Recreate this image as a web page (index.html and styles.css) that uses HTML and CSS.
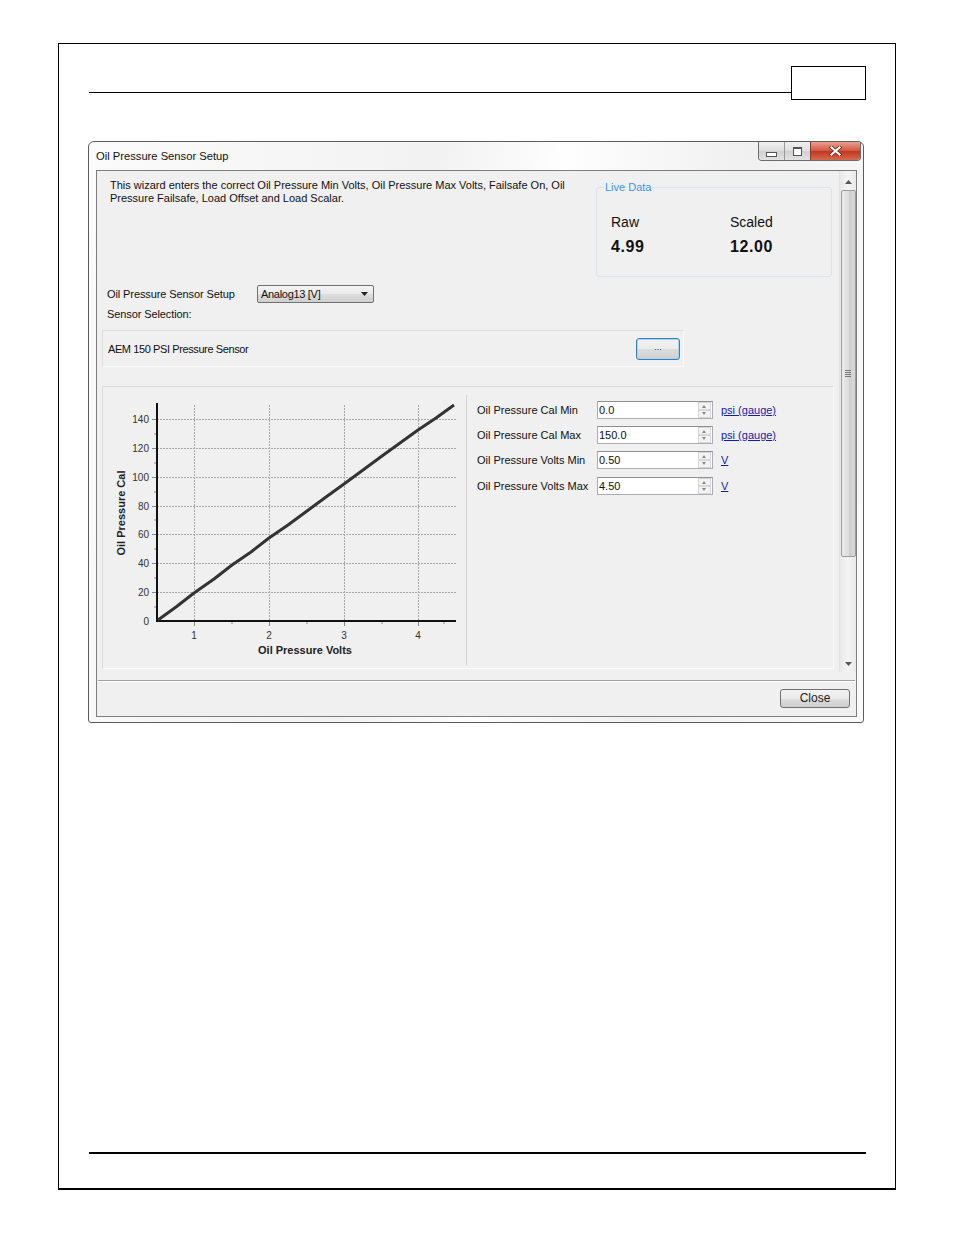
FILE: index.html
```html
<!DOCTYPE html>
<html>
<head>
<meta charset="utf-8">
<link rel="stylesheet" href="styles.css">
</head>
<body>
<div class="page">
  <div class="page-header">
    <div class="header-line"></div>
    <div class="header-box"></div>
  </div>

  <div class="window">
    <div class="titlebar">
      <div class="title">Oil Pressure Sensor Setup</div>
      <div class="caption-buttons">
        <div class="cap-btn cap-min"><span class="min-glyph"></span></div>
        <div class="cap-btn cap-max"><span class="max-glyph"></span></div>
        <div class="cap-btn cap-close">
          <svg width="13" height="10" viewBox="0 0 13 10"><path d="M2.5 1.5 L10.5 8.5 M10.5 1.5 L2.5 8.5" stroke="#6a2018" stroke-width="3.6" stroke-linecap="square"/><path d="M2.5 1.5 L10.5 8.5 M10.5 1.5 L2.5 8.5" stroke="#ffffff" stroke-width="2.2" stroke-linecap="square"/></svg>
        </div>
      </div>
    </div>

    <div class="client">
      <div class="main">
        <div class="content">
          <div class="top">
            <p class="desc">This wizard enters the correct Oil Pressure Min Volts, Oil Pressure Max Volts, Failsafe On, Oil Pressure Failsafe, Load Offset and Load Scalar.</p>
            <div class="live">
              <span class="legend">Live Data</span>
              <div class="live-grid">
                <div class="live-col">
                  <div class="live-label">Raw</div>
                  <div class="live-value">4.99</div>
                </div>
                <div class="live-col">
                  <div class="live-label">Scaled</div>
                  <div class="live-value">12.00</div>
                </div>
              </div>
            </div>
          </div>

          <div class="setup-row">
            <span class="setup-label">Oil Pressure Sensor Setup</span>
            <div class="combo">
              <span>Analog13 [V]</span>
              <svg class="combo-arrow" width="7" height="4" viewBox="0 0 7 4"><path d="M0 0 H7 L3.5 4 Z" fill="#222"/></svg>
            </div>
          </div>
          <div class="sel-label">Sensor Selection:</div>

          <div class="sensor-panel">
            <span class="sensor-name">AEM 150 PSI Pressure Sensor</span>
            <div class="dots-btn">...</div>
          </div>

          <div class="lower">
            <div class="chart-col">
              <svg width="362" height="270" viewBox="0 0 362 270" class="chart">
                <g stroke="#a8a8a8" stroke-width="1" stroke-dasharray="2 1">
                  <line x1="53" y1="24.5" x2="352" y2="24.5"/>
                  <line x1="53" y1="53.5" x2="352" y2="53.5"/>
                  <line x1="53" y1="82.5" x2="352" y2="82.5"/>
                  <line x1="53" y1="111.5" x2="352" y2="111.5"/>
                  <line x1="53" y1="139.5" x2="352" y2="139.5"/>
                  <line x1="53" y1="168.5" x2="352" y2="168.5"/>
                  <line x1="53" y1="197.5" x2="352" y2="197.5"/>
                  <line x1="90.5" y1="10" x2="90.5" y2="226"/>
                  <line x1="165.5" y1="10" x2="165.5" y2="226"/>
                  <line x1="240.5" y1="10" x2="240.5" y2="226"/>
                  <line x1="314.5" y1="10" x2="314.5" y2="226"/>
                </g>
                <g stroke="#888" stroke-width="1">
                  <line x1="90.5" y1="226" x2="90.5" y2="231"/>
                  <line x1="165.5" y1="226" x2="165.5" y2="231"/>
                  <line x1="240.5" y1="226" x2="240.5" y2="231"/>
                  <line x1="314.5" y1="226" x2="314.5" y2="231"/>
                  <line x1="128" y1="226" x2="128" y2="229"/>
                  <line x1="203" y1="226" x2="203" y2="229"/>
                  <line x1="278" y1="226" x2="278" y2="229"/>
                  <line x1="340" y1="226" x2="340" y2="229"/>
                  <line x1="48" y1="24.5" x2="53" y2="24.5"/>
                  <line x1="48" y1="53.5" x2="53" y2="53.5"/>
                  <line x1="48" y1="82.5" x2="53" y2="82.5"/>
                  <line x1="48" y1="111.5" x2="53" y2="111.5"/>
                  <line x1="48" y1="139.5" x2="53" y2="139.5"/>
                  <line x1="48" y1="168.5" x2="53" y2="168.5"/>
                  <line x1="48" y1="197.5" x2="53" y2="197.5"/>
                  <line x1="50" y1="39" x2="53" y2="39"/>
                  <line x1="50" y1="68" x2="53" y2="68"/>
                  <line x1="50" y1="97" x2="53" y2="97"/>
                  <line x1="50" y1="125" x2="53" y2="125"/>
                  <line x1="50" y1="154" x2="53" y2="154"/>
                  <line x1="50" y1="183" x2="53" y2="183"/>
                  <line x1="50" y1="212" x2="53" y2="212"/>
                </g>
                <line x1="53" y1="8" x2="53" y2="227" stroke="#111" stroke-width="2"/>
                <line x1="52" y1="226" x2="352" y2="226" stroke="#111" stroke-width="2"/>
                <polyline points="54,225 72,212 90,198 110,184 128,170 147,157 165,143 184,130 203,116 222,102 240,89 259,75 278,61 296,48 314,35 332,23 350,10" fill="none" stroke="#333" stroke-width="3" stroke-linejoin="round"/>
                <g class="tick" text-anchor="end">
                  <text x="45" y="28">140</text>
                  <text x="45" y="57">120</text>
                  <text x="45" y="86">100</text>
                  <text x="45" y="115">80</text>
                  <text x="45" y="143">60</text>
                  <text x="45" y="172">40</text>
                  <text x="45" y="201">20</text>
                  <text x="45" y="230">0</text>
                </g>
                <g class="tick" text-anchor="middle">
                  <text x="90" y="244">1</text>
                  <text x="165" y="244">2</text>
                  <text x="240" y="244">3</text>
                  <text x="314" y="244">4</text>
                </g>
                <text class="axis-title" x="201" y="259" text-anchor="middle">Oil Pressure Volts</text>
                <text class="axis-title" x="0" y="0" text-anchor="middle" transform="translate(21 118) rotate(-90)">Oil Pressure Cal</text>
              </svg>
            </div>
            <div class="form-col">
              <div class="form-row">
                <span class="form-label">Oil Pressure Cal Min</span>
                <div class="spin-input"><span class="val">0.0</span><div class="spin"><span class="spin-up"></span><span class="spin-down"></span></div></div>
                <span class="unit">psi (gauge)</span>
              </div>
              <div class="form-row">
                <span class="form-label">Oil Pressure Cal Max</span>
                <div class="spin-input"><span class="val">150.0</span><div class="spin"><span class="spin-up"></span><span class="spin-down"></span></div></div>
                <span class="unit">psi (gauge)</span>
              </div>
              <div class="form-row">
                <span class="form-label">Oil Pressure Volts Min</span>
                <div class="spin-input"><span class="val">0.50</span><div class="spin"><span class="spin-up"></span><span class="spin-down"></span></div></div>
                <span class="unit">V</span>
              </div>
              <div class="form-row">
                <span class="form-label">Oil Pressure Volts Max</span>
                <div class="spin-input"><span class="val">4.50</span><div class="spin"><span class="spin-up"></span><span class="spin-down"></span></div></div>
                <span class="unit">V</span>
              </div>
            </div>
          </div>
        </div>

        <div class="scrollbar">
          <div class="sb-arrow"><svg width="7" height="4" viewBox="0 0 7 4"><path d="M0 4 H7 L3.5 0 Z" fill="#555"/></svg></div>
          <div class="sb-thumb">
            <svg class="grip" width="6" height="7" viewBox="0 0 6 7"><g stroke="#777" stroke-width="1"><line x1="0" y1="0.5" x2="6" y2="0.5"/><line x1="0" y1="2.5" x2="6" y2="2.5"/><line x1="0" y1="4.5" x2="6" y2="4.5"/><line x1="0" y1="6.5" x2="6" y2="6.5"/></g></svg>
          </div>
          <div class="sb-track"></div>
          <div class="sb-arrow"><svg width="7" height="4" viewBox="0 0 7 4"><path d="M0 0 H7 L3.5 4 Z" fill="#555"/></svg></div>
        </div>
      </div>

      <div class="separator"></div>
      <div class="actions">
        <div class="close-btn">Close</div>
      </div>
    </div>
  </div>

  <div class="footer-line"></div>
</div>
</body>
</html>
```

FILE: styles.css
```css
html, body {
  margin: 0;
  padding: 0;
  background: #ffffff;
}

body {
  font-family: "Liberation Sans", Arial, sans-serif;
  color: #000;
}

.page {
  margin: 43px 0 0 58px;
  width: 838px;
  height: 1147px;
  box-sizing: border-box;
  border: 1px solid #000;
  border-bottom-width: 2px;
  display: flex;
  flex-direction: column;
}

.page-header {
  display: flex;
  align-items: flex-end;
  margin: 22px 29px 0 30px;
  height: 34px;
}

.header-line {
  flex: 1;
  height: 1px;
  background: #000;
  margin-bottom: 7px;
}

.header-box {
  width: 75px;
  height: 34px;
  box-sizing: border-box;
  border: 1px solid #000;
}

.footer-line {
  margin: auto 29px 34px 30px;
  height: 2px;
  background: #000;
}

/* Window */
.window {
  margin: 41px 0 0 29px;
  width: 776px;
  height: 582px;
  box-sizing: border-box;
  border: 1px solid #5d5d5d;
  border-radius: 6px 6px 3px 3px;
  background: linear-gradient(100deg, #fbfbfb 0%, #f2f2f2 40%, #fefefe 55%, #f0f0f0 75%, #fafafa 100%);
  padding: 0 6px 5px 7px;
  display: flex;
  flex-direction: column;
}

.titlebar {
  height: 28px;
  display: flex;
  justify-content: space-between;
  align-items: flex-start;
}

.title {
  padding-top: 7px;
  font-size: 11.2px;
  line-height: 14px;
  color: #111;
}

.caption-buttons {
  display: flex;
  margin-right: -4px;
  height: 19px;
  box-sizing: border-box;
  border: 1px solid #6b6b6b;
  border-top: none;
  border-radius: 0 0 4px 4px;
  overflow: hidden;
}

.cap-btn {
  display: flex;
  align-items: center;
  justify-content: center;
  height: 18px;
  box-sizing: border-box;
}

.cap-min {
  width: 26px;
  background: linear-gradient(#f0f0f0, #dedede 50%, #cfcfcf 51%, #e2e2e2);
  border-right: 1px solid #9a9a9a;
}

.cap-max {
  width: 26px;
  background: linear-gradient(#f0f0f0, #dedede 50%, #cfcfcf 51%, #e2e2e2);
  border-right: 1px solid #8a3a30;
}

.cap-close {
  width: 49px;
  background: linear-gradient(#e8a093, #d2553f 50%, #c1361d 51%, #d56a4f);
}

.min-glyph {
  width: 9px;
  height: 3px;
  margin-top: 6px;
  border: 1px solid #555;
  background: #fff;
}

.max-glyph {
  width: 7px;
  height: 6px;
  border: 1px solid #555;
  border-top-width: 2px;
  background: #fff;
}

.client {
  flex: 1;
  border: 1px solid #7d7d7d;
  background: #f0f0f0;
  display: flex;
  flex-direction: column;
  font-size: 11px;
}

.main {
  height: 501px;
  display: flex;
}

.content {
  flex: 1;
  min-width: 0;
}

.top {
  display: flex;
  height: 106px;
}

.desc {
  margin: 8px 0 0 13px;
  width: 462px;
  font-size: 11px;
  line-height: 13px;
  color: #111;
}

.live {
  flex-shrink: 0;
  margin: 16px 7px 0 auto;
  width: 236px;
  height: 90px;
  box-sizing: border-box;
  border: 1px solid #dde3e8;
  border-radius: 3px;
  padding-left: 7px;
}

.legend {
  display: inline-block;
  margin-top: -7px;
  padding: 0 1px;
  background: #f0f0f0;
  color: #3d95e0;
  font-size: 11px;
  line-height: 13px;
  vertical-align: top;
}

.live-grid {
  display: flex;
  margin: 14px 0 0 7px;
}

.live-col {
  flex-shrink: 0;
  width: 119px;
}

.live-label {
  font-size: 14px;
  line-height: 17px;
  color: #111;
}

.live-value {
  margin-top: 7px;
  font-size: 16px;
  line-height: 18px;
  font-weight: bold;
  letter-spacing: 0.6px;
  color: #111;
}

.setup-row {
  display: flex;
  align-items: center;
  height: 18px;
  margin: 8px 0 0 10px;
}

.setup-label {
  width: 150px;
  color: #111;
  letter-spacing: -0.1px;
}

.combo {
  width: 117px;
  height: 18px;
  box-sizing: border-box;
  border: 1px solid #707070;
  border-radius: 2px;
  background: linear-gradient(#f3f3f3, #ebebeb 50%, #dddddd 51%, #cfcfcf);
  display: flex;
  align-items: center;
  justify-content: space-between;
  padding: 0 5px 0 3px;
  color: #111;
  letter-spacing: -0.3px;
}

.combo-arrow {
  display: block;
}

.sel-label {
  margin: 4px 0 0 10px;
  line-height: 14px;
  color: #111;
  letter-spacing: -0.1px;
}

.sensor-panel {
  margin: 9px 0 0 5px;
  width: 582px;
  height: 37px;
  box-sizing: border-box;
  border: 1px solid #dedede;
  border-right-color: #f8f8f8;
  border-bottom-color: #f8f8f8;
  display: flex;
  align-items: center;
  justify-content: space-between;
  padding: 0 3px 0 5px;
  color: #111;
}

.sensor-name {
  letter-spacing: -0.4px;
}

.dots-btn {
  width: 44px;
  height: 22px;
  box-sizing: border-box;
  border: 1px solid #3c7fb1;
  border-radius: 3px;
  box-shadow: inset 0 0 0 1px #a6d7f2;
  background: linear-gradient(#f2f2f2, #ebebeb 50%, #dddddd 51%, #cfcfcf);
  text-align: center;
  font-size: 9px;
  line-height: 16px;
  color: #333;
}

.lower {
  margin: 19px 0 0 5px;
  width: 732px;
  height: 283px;
  box-sizing: border-box;
  border: 1px solid #dcdcdc;
  border-right-color: #fafafa;
  border-bottom-color: #fafafa;
  display: flex;
  align-items: flex-start;
}

.chart-col {
  width: 362px;
  height: 270px;
  margin: 8px 0 0 1px;
  border-right: 1px solid #d4d4d4;
}

.chart {
  display: block;
}

.tick {
  font-family: "Liberation Sans", Arial, sans-serif;
  font-size: 10px;
  fill: #333;
}

.axis-title {
  font-family: "Liberation Sans", Arial, sans-serif;
  font-size: 11px;
  font-weight: bold;
  fill: #222;
}

.form-col {
  margin: 10px 0 0 10px;
}

.form-row {
  display: flex;
  align-items: center;
  height: 25.3px;
}

.form-label {
  width: 120px;
  color: #111;
}

.spin-input {
  width: 116px;
  height: 18px;
  box-sizing: border-box;
  border: 1px solid #abadb3;
  border-top-color: #8e8f8f;
  background: #fff;
  display: flex;
  align-items: center;
  justify-content: space-between;
  padding-left: 1px;
  color: #111;
}

.spin {
  width: 13px;
  height: 16px;
  margin-right: 1px;
  display: flex;
  flex-direction: column;
}

.spin-up, .spin-down {
  flex: 1;
  box-sizing: border-box;
  border: 1px solid #d6d6d6;
  background: #f3f3f3;
  position: relative;
}

.spin-up::after, .spin-down::after {
  content: "";
  position: absolute;
  left: 3px;
  top: 2px;
  border-left: 2.5px solid transparent;
  border-right: 2.5px solid transparent;
}

.spin-up::after {
  border-bottom: 3px solid #8a8a8a;
}

.spin-down::after {
  top: 1px;
  border-top: 3px solid #8a8a8a;
}

.unit {
  margin-left: 8px;
  color: #1a1aa6;
  text-decoration: underline;
}

.scrollbar {
  width: 17px;
  display: flex;
  flex-direction: column;
  align-items: center;
  padding-top: 2px;
  box-sizing: border-box;
  background: linear-gradient(90deg, #e9e9e9, #f4f4f4 50%, #e9e9e9);
  border-left: 1px solid #e2e2e2;
}

.sb-arrow {
  height: 17px;
  display: flex;
  align-items: center;
  justify-content: center;
}

.sb-thumb {
  width: 15px;
  height: 367px;
  box-sizing: border-box;
  border: 1px solid #9b9b9b;
  border-radius: 2px;
  background: linear-gradient(90deg, #ececec, #dcdcdc 50%, #cdcdcd 51%, #d9d9d9);
  display: flex;
  align-items: center;
  justify-content: center;
}

.grip {
  display: block;
}

.sb-track {
  flex: 1;
}

.separator {
  margin: 8px 1px 0 1px;
  height: 1px;
  background: #a0a0a0;
  border-bottom: 1px solid #ffffff;
}

.actions {
  display: flex;
  justify-content: flex-end;
  padding: 7px 6px 7px 0;
}

.close-btn {
  width: 70px;
  height: 19px;
  box-sizing: border-box;
  border: 1px solid #707070;
  border-radius: 3px;
  background: linear-gradient(#f2f2f2, #ebebeb 50%, #dddddd 51%, #cfcfcf);
  text-align: center;
  font-size: 12px;
  line-height: 17px;
  color: #222;
}
```
